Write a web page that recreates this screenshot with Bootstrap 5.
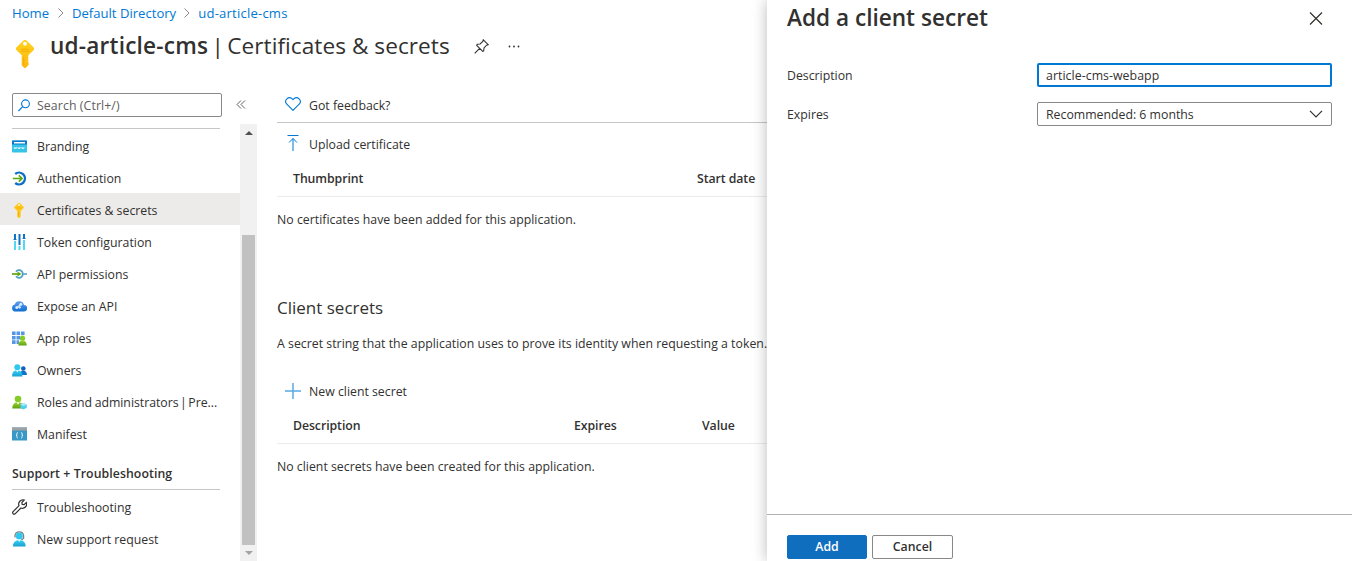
<!DOCTYPE html>
<html lang="en">
<head>
<meta charset="utf-8">
<meta name="viewport" content="width=device-width, initial-scale=1">
<title>Certificates &amp; secrets</title>
<link href="https://cdn.jsdelivr.net/npm/bootstrap@5.3.0/dist/css/bootstrap.min.css" rel="stylesheet">
<style>
body{font-family:"Open Sans","Noto Sans",sans-serif;font-size:12.3px;line-height:18px;color:#323130;height:561px;background:#fff}
svg{display:block;flex:none}
.page-main{width:767px}
.crumbs{height:27px;padding:0 0 2px 12px;font-size:13.1px}
.crumbs a{color:#0078d4;text-decoration:none}
.crumbs a:last-child{letter-spacing:.2px}
.title-row{height:65px;padding-left:12px}
.title-row h1{font-size:22.6px;line-height:30px;margin:4px 0 0 12px;font-weight:400;white-space:nowrap;letter-spacing:.05px}
.title-row b,.panel-title{font-weight:600}
.title-row b{letter-spacing:.2px}
.title-row .sep{word-spacing:-2.6px}
.side{width:240px}
.search-box{width:210px;height:24px;margin-left:12px;border:1px solid #8a8886;border-radius:2px;color:#605e5c;padding-left:5px;gap:7px}
.search-box span{padding-top:1px;letter-spacing:.1px}
.rule{height:1px;background:#c8c6c4;width:208px;margin-left:12px}
.side .list-group-item{height:32px;border:0;padding:4px 0 0 12px;color:#323130;background:transparent;gap:10px;white-space:nowrap;border-radius:0}
.side .list-group-item svg{margin-bottom:2px}
.side .list-group-item.current{background:#edebe9}
.side .list-group-item.tight{letter-spacing:-.03px;word-spacing:-.6px}
.side-head{font-weight:600;height:40px;padding:16px 0 0 12px;letter-spacing:.07px}
.scroller{width:17px;margin-top:32px;background:#f1f1f1;height:437px}
.thumb{width:13px;height:310px;background:#c1c1c1}
.work{width:490px;margin-left:20px}
.cmd{padding-left:8px;gap:8px}
.cmd svg{margin-bottom:3px}
.work h2{font-size:17px;line-height:24px;font-weight:400}
.thead-row{font-weight:600;height:36px;border-bottom:1px solid #edebe9;padding-left:16px;letter-spacing:-.07px}
.panel{width:585px;background:#fff;box-shadow:0 0 14px rgba(0,0,0,.27);z-index:2}
.panel-title{font-size:22.6px;line-height:30px}
.field{height:24px;width:295px;border-radius:2px;padding:0 8px;font-size:12.3px;line-height:18px;color:#323130}
.field.text{border:2px solid #0078d4;padding:0 7px;outline:0;letter-spacing:.06px}
.field.drop{border:1px solid #8a8886}
.nudge{padding-top:2px}
.panel-foot{height:47px;border-top:1px solid #b3b0ad;padding:20px 0 0 20px;gap:5px}
.panel-foot .btn{height:24px;border-radius:2px;font-size:12.3px;line-height:18px;padding:2px 0;font-weight:600}
.btn-add{width:80px;background:#106ebe;color:#fff;border:1px solid #106ebe}
.btn-cancel{width:81px;border:1px solid #8a8886;color:#323130;background:#fff}
</style>
</head>
<body class="d-flex overflow-hidden">
<svg width="0" height="0" class="position-absolute" aria-hidden="true"><defs>
<linearGradient id="gold" x2="0" y2="1"><stop stop-color="#ffd21a"/><stop offset="1" stop-color="#fdb813"/></linearGradient>
<linearGradient id="sky" x2="0" y2="1"><stop stop-color="#32d4f5"/><stop offset="1" stop-color="#1b9fd0"/></linearGradient>
<linearGradient id="blue" x2="0" y2="1"><stop stop-color="#5ea0ef"/><stop offset="1" stop-color="#0f6fd0"/></linearGradient>
<linearGradient id="leaf" x2="0" y2="1"><stop stop-color="#9bd62e"/><stop offset="1" stop-color="#5e9f14"/></linearGradient>
<symbol id="key" viewBox="0 0 18 28"><path d="M7.2.7a2.6 2.6 0 0 1 3.600 0l6.400 6.200a2.500 2.500 0 0 1 0 3.700L12.500 15v1l-.7.8.9 1-.9 1.200.9 1.200-.9 1.300.9 1.200v2L9.700 28H8.300L5.700 25.500V15L.8 10.600a2.500 2.500 0 0 1 0-3.700z" fill="url(#gold)"/><circle cx="9" cy="3.700" r="1.900" fill="#fff"/><path d="M5 9.300h8M5 11.300h8" stroke="#f5a800" stroke-width=".9"/><path d="M7.800 17v8" stroke="#f5a800" stroke-width=".9"/></symbol>
<symbol id="key-sm" viewBox="0 0 10 15"><path d="M3.800.5a1.700 1.700 0 0 1 2.400 0l3 2.900a1.500 1.500 0 0 1 0 2.200L6.700 8v5.600L5.400 15h-.8l-1.300-1.300V8L.8 5.600a1.500 1.500 0 0 1 0-2.200z" fill="#ffc61a"/><circle cx="5" cy="2.100" r="1" fill="#fff3cf"/><path d="M2.800 5h4.400M4.500 8.500v4.800" stroke="#f5a800" stroke-width=".8"/></symbol>
</defs></svg>

<main class="page-main d-flex flex-column flex-shrink-0">
  <nav class="crumbs d-flex align-items-center">
    <a href="#" style="width:38px">Home</a>
    <svg class="ms-2" width="6" height="10" fill="none" stroke="#8a8886"><path d="M.5.5 5 5 .5 9.500"/></svg>
    <a href="#" class="ms-2 text-nowrap">Default Directory</a>
    <svg class="ms-2" width="6" height="10" fill="none" stroke="#8a8886"><path d="M.5.5 5 5 .5 9.500"/></svg>
    <a href="#" class="ms-2 text-nowrap">ud-article-cms</a>
  </nav>
  <header class="title-row d-flex align-items-start">
    <svg width="26" height="28" style="margin-top:13px"><use href="#key" x="4" width="18" height="28"/></svg>
    <h1><b>ud-article-cms</b><span class="sep"> | </span>Certificates &amp; secrets</h1>
    <svg style="margin:12px 0 0 24px" width="15" height="15" viewBox="0 0 15 15" fill="none" stroke="#323130" stroke-width="1.100"><path d="M9.300.8 14.200 5.700 12.600 6.200 10 8.900 9.700 11.900 8.700 12.300 2.700 6.300 3.200 5.300 6.100 5 8.800 2.400zM5.600 9.400.7 14.300"/></svg>
    <svg style="margin:18px 0 0 18px" width="14" height="3" fill="#323130"><circle cx="2.500" cy="1.500" r=".9"/><circle cx="7" cy="1.500" r=".9"/><circle cx="11.500" cy="1.500" r=".9"/></svg>
  </header>

  <div class="d-flex flex-grow-1">
    <aside class="side">
      <div class="d-flex align-items-center" style="height:26px">
        <div class="search-box d-flex align-items-center"><svg width="12" height="13" fill="none" stroke="#0078d4" stroke-width="1.100"><circle cx="7.500" cy="4.800" r="3.900"/><path d="M4.700 7.600 .4 12"/></svg><span>Search (Ctrl+/)</span></div>
      </div>
      <div class="rule" style="margin-top:10px"></div>
      <div class="list-group">
        <a href="#" class="list-group-item d-flex align-items-center"><svg width="15" height="15" viewBox="0 0 15 15"><rect y="1.500" width="15" height="12" rx=".7" fill="#35c4e8"/><path d="M0 5.500V2.200Q0 1.500.7 1.500h13.600q.7 0 .7.700v3.300z" fill="#0c78c8"/><path d="M2 3h11v1.500H2z" fill="#fff"/><path d="M2 8l.7 2 .6-1.500.6 1.500.7-2M5.800 8l.7 2 .6-1.500.6 1.500.7-2M9.600 8l.7 2 .6-1.500.6 1.500.7-2" fill="none" stroke="#e3f8ff" stroke-width=".8"/></svg>Branding</a>
        <a href="#" class="list-group-item d-flex align-items-center"><svg width="15" height="15" viewBox="0 0 15 15" fill="none"><path d="M3.200 3A5.900 5.900 0 1 1 3.200 12" stroke="#0f6fc6" stroke-width="2.400"/><path d="M.8 7.500H10M6.800 4.300 10 7.500l-3.200 3.200" stroke="#5ea60f" stroke-width="1.700"/></svg>Authentication</a>
        <a href="#" class="list-group-item current d-flex align-items-center"><svg width="15" height="15"><use href="#key-sm" x="2" width="10" height="15"/></svg>Certificates &amp; secrets</a>
        <a href="#" class="list-group-item d-flex align-items-center"><svg width="15" height="16" viewBox="0 0 15 16"><path d="M2 0h2v5H2zM6.500 0h2v11h-2zM11 0h2v4h-2z" fill="#0f73c8"/><path d="M2 7h2v9H2zM6.500 12h2v4h-2zM11 6h2v10h-2z" fill="#50d8f5"/><path d="M1.500 5h3v1h-3zM10.500 4h3v1h-3z" fill="#0f73c8"/></svg>Token configuration</a>
        <a href="#" class="list-group-item d-flex align-items-center"><svg width="15" height="13" viewBox="0 0 15 13" fill="none"><path d="M4 3.700a3.800 3.800 0 1 1 0 4.600M11 6h4" stroke="#4ba0c8" stroke-width="1.700"/><path d="M0 6h6" stroke="#5ea60f" stroke-width="1.700"/><path d="M5.500 3.600 9.500 6l-4 2.400z" fill="#5ea60f"/></svg>API permissions</a>
        <a href="#" class="list-group-item d-flex align-items-center"><svg width="15" height="15" viewBox="0 0 15 15"><path d="M3.500 12.500A3.500 3.500 0 0 1 2.700 5.600 4.800 4.800 0 0 1 12 5.900a3.300 3.300 0 0 1-.3 6.600z" fill="url(#blue)"/><path d="M4.800 8.500 9.200 5" stroke="#fff" stroke-width="1"/><circle cx="4.800" cy="8.400" r="1.500" fill="#d8eaff"/><circle cx="8.800" cy="5.200" r="1.500" fill="#d8eaff"/><circle cx="7.600" cy="8.200" r="1.200" fill="#d8eaff"/></svg>Expose an API</a>
        <a href="#" class="list-group-item d-flex align-items-center"><svg width="15" height="15" viewBox="0 0 15 15"><path d="M0 .5h3.600v3.600H0zM4.500.5h3.600v3.600H4.500zM9 .5h3.600v3.600H9zM0 4.900h3.600v3.600H0zM4.500 4.900h3.600v3.600H4.500zM0 9.300h3.600v3.600H0zM4.500 9.300h2.500v3.600H4.500z" fill="#5596e6"/><circle cx="10.500" cy="7.200" r="2.600" fill="#86cc26"/><path d="M6.300 14.500q.2-5 4.200-5t4.300 5z" fill="url(#leaf)"/></svg>App roles</a>
        <a href="#" class="list-group-item d-flex align-items-center"><svg width="15" height="15" viewBox="0 0 15 15"><circle cx="11.300" cy="5.500" r="2.300" fill="#0f62bd"/><path d="M8 12q.2-5 3.500-4.500T15 12z" fill="#0f73c8"/><circle cx="5.300" cy="4.200" r="3" fill="#32c8ed"/><path d="M0 13.500q0-6.500 5.300-6.300t5.200 6.300z" fill="url(#sky)"/><path d="M4 7.200h2.600L5.300 9.600z" fill="#fff"/></svg>Owners</a>
        <a href="#" class="list-group-item tight d-flex align-items-center"><svg width="15" height="15" viewBox="0 0 15 15"><circle cx="6" cy="4" r="3.300" fill="#86cc26"/><path d="M.3 13.500Q.5 7 6 7t5.800 6.500z" fill="url(#leaf)"/><path d="M4.500 7.200h3L6 9.800z" fill="#fff"/><path d="M11.500 8l3.300 1.600v3.200l-3.300 1.700-3-1.700V9.600z" fill="#50cff0"/><path d="M8.500 9.600 11.500 11l3.300-1.400L11.500 8z" fill="#a8ebfa"/></svg><span>Roles and administrators<span style="margin:0 -1px"> | </span>Pre...</span></a>
        <a href="#" class="list-group-item d-flex align-items-center"><svg width="15" height="14" viewBox="0 0 15 14"><path d="M0 .5h15v13H0z" fill="#3999c6"/><path d="M0 .5h15v3H0z" fill="#a0a1a2"/><path d="M5.800 5.500q-1.200 0-.9 1.500t-.9 1.300q1.200 0 .9 1.300t.9 1.400M9.200 5.500q1.200 0 .9 1.500t.9 1.300q-1.200 0-.9 1.300t-.9 1.400" fill="none" stroke="#fff" stroke-width=".8"/></svg>Manifest</a>
      </div>
      <div class="side-head">Support + Troubleshooting</div>
      <div class="rule"></div>
      <div class="list-group">
        <a href="#" class="list-group-item d-flex align-items-center"><svg width="15" height="16" viewBox="0 0 15 16" fill="none" stroke="#323130" stroke-width="1.200"><path d="M.9 12.800 7 6.700a4.200 4.200 0 0 1 5.200-5.600L9.900 3.500l.3 1.900 1.900.3 2.200-2.200A4.200 4.200 0 0 1 8.900 9l-5.800 5.800a1.500 1.500 0 0 1-2.200-2z"/></svg>Troubleshooting</a>
        <a href="#" class="list-group-item d-flex align-items-center"><svg width="15" height="16" viewBox="0 0 15 16"><path d="M3 6.500V4.500Q3.500.8 7.300.8t4.300 3.700v2.800L9.500 9" fill="none" stroke="#7a8288" stroke-width="1.300"/><circle cx="7.300" cy="5" r="3.500" fill="#32c8ed"/><path d="M1 15.500Q1 9 7.300 9t6.300 6.500z" fill="url(#sky)"/><path d="M5.800 8.800h3L7.300 11z" fill="#e8faff"/></svg>New support request</a>
      </div>
    </aside>
    <div class="d-flex flex-column align-items-center">
      <div class="scroller d-flex flex-column align-items-center position-relative">
        <svg class="position-absolute" style="top:-24px;left:-4px" width="10" height="9" fill="none" stroke="#605e5c"><path d="M5 .5 1 4.500l4 4M9 .5 5 4.500l4 4"/></svg>
        <svg style="margin-top:7px" width="8" height="4" fill="#505050"><path d="M0 4 4 0l4 4z"/></svg>
        <div class="thumb" style="margin-top:100px"></div>
        <svg style="margin-top:6px" width="8" height="4" fill="#a3a3a3"><path d="M0 0h8L4 4z"/></svg>
      </div>
    </div>
    <section class="work text-nowrap">
      <div class="cmd d-flex align-items-center border-bottom" style="height:31px;padding-bottom:3px;border-color:#c8c6c4!important"><svg width="16" height="14" viewBox="0 0 16 14" fill="none" stroke="#0078d4" stroke-width="1.100"><path d="M8 13.300 1.600 7A3.800 3.800 0 0 1 7 1.700l1 1 1-1A3.800 3.800 0 0 1 14.400 7z"/></svg>Got feedback?</div>
      <div class="cmd d-flex align-items-center" style="height:38px;padding-top:6px"><svg class="mb-1" width="16" height="16" fill="none" stroke="#0078d4"><path d="M2.500 .5h11M8 16V3.500M4 7.500l4-4 4 4"/></svg>Upload certificate</div>
      <div class="thead-row d-flex align-items-center"><span style="width:404px">Thumbprint</span><span>Start date</span></div>
      <p class="mb-0" style="padding-top:14px;height:99px;letter-spacing:.02px">No certificates have been added for this application.</p>
      <h2 class="mb-0">Client secrets</h2>
      <p class="mb-0" style="padding-top:15px;height:59px;letter-spacing:.02px">A secret string that the application uses to prove its identity when requesting a token.</p>
      <div class="cmd d-flex align-items-center" style="height:29px;padding-bottom:3px"><svg width="16" height="16" stroke="#5aa9e4" stroke-width="1.500"><path d="M0 8h16M8 0v16"/></svg>New client secret</div>
      <div class="thead-row d-flex align-items-center"><span style="width:281px">Description</span><span style="width:128px">Expires</span><span>Value</span></div>
      <p class="mb-0" style="padding-top:14px">No client secrets have been created for this application.</p>
    </section>
  </div>
</main>

<aside class="panel d-flex flex-column flex-shrink-0">
  <div class="d-flex justify-content-between" style="height:63px;padding:3px 29px 0 20px">
    <div class="panel-title">Add a client secret</div>
    <svg style="margin-top:9px" width="14" height="13" fill="none" stroke="#323130" stroke-width="1.200"><path d="M1 .5l12 12M13 .5l-12 12"/></svg>
  </div>
  <div class="d-flex flex-column flex-grow-1" style="padding:0 20px;gap:15px">
    <div class="d-flex align-items-center justify-content-between"><label for="desc" class="nudge">Description</label><input id="desc" class="field text" value="article-cms-webapp"></div>
    <div class="d-flex align-items-center justify-content-between"><span class="nudge">Expires</span><div class="field drop d-flex align-items-center justify-content-between"><span class="nudge">Recommended: 6 months</span><svg width="14" height="8" fill="none" stroke="#323130" stroke-width="1.200"><path d="M1 .8l6 6 6-6"/></svg></div></div>
  </div>
  <div class="panel-foot d-flex"><button class="btn btn-add">Add</button><button class="btn btn-cancel">Cancel</button></div>
</aside>
<script src="https://cdn.jsdelivr.net/npm/bootstrap@5.3.0/dist/js/bootstrap.bundle.min.js"></script>
</body>
</html>
